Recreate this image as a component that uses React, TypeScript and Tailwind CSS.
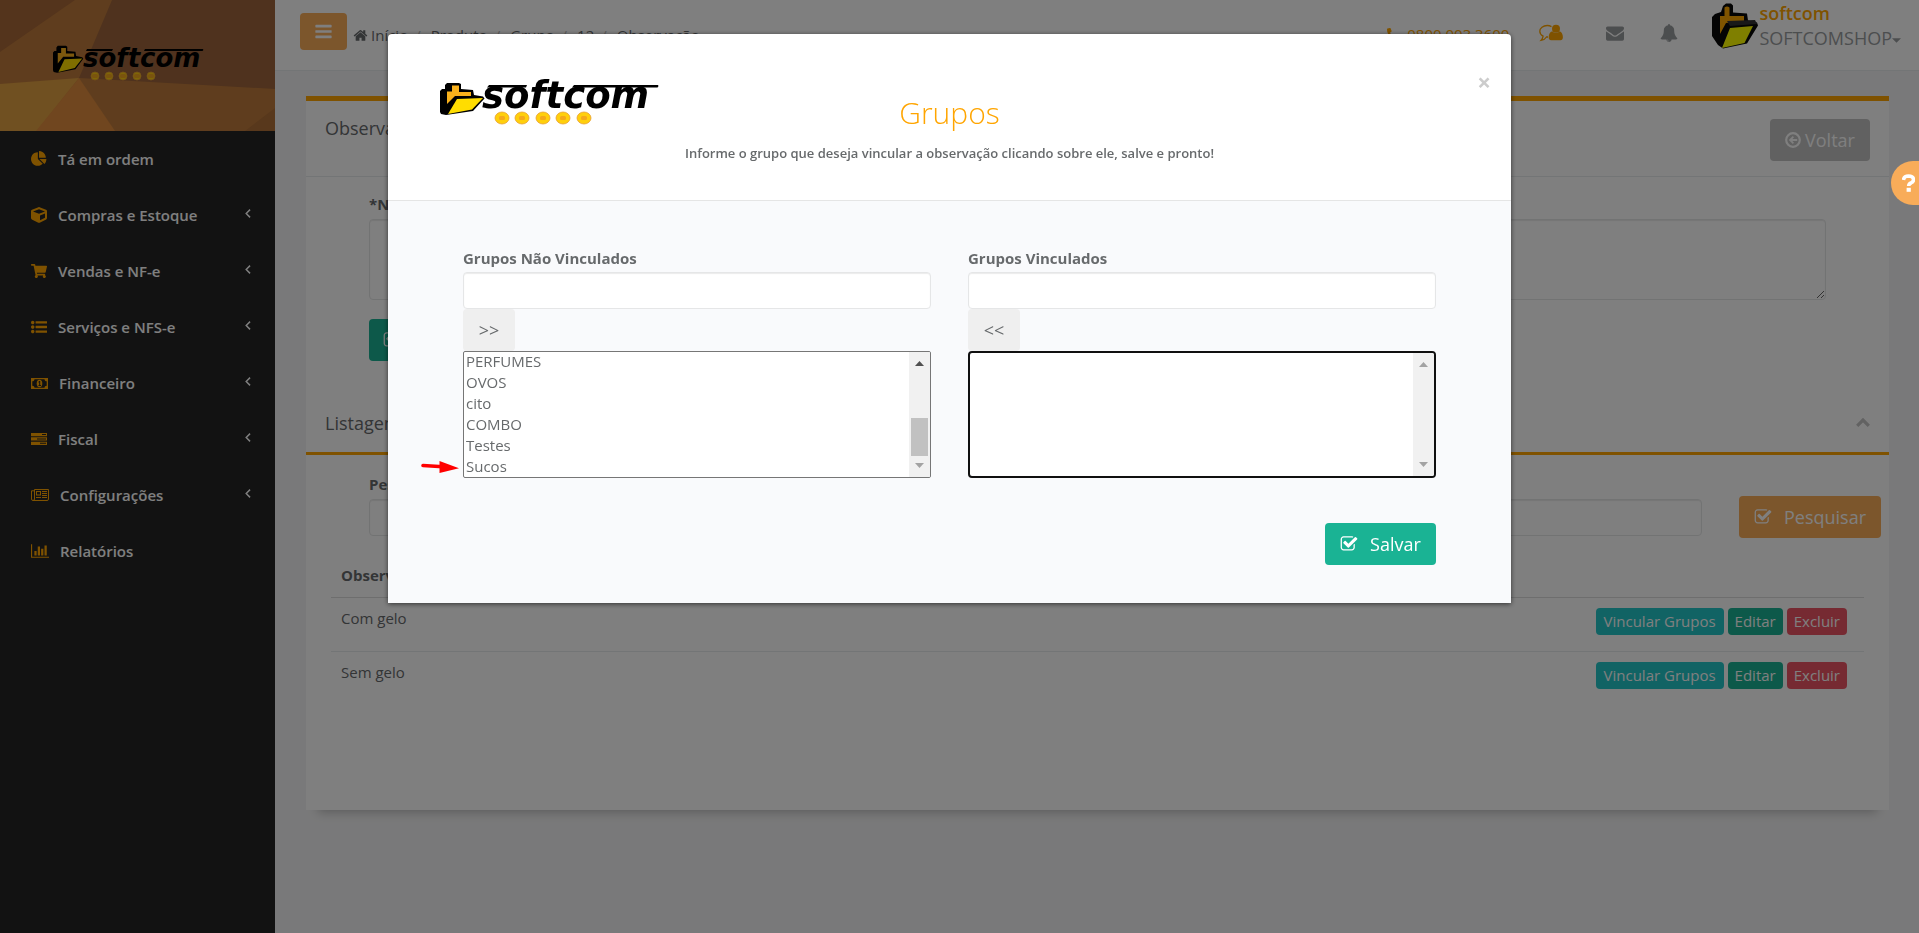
import { useEffect, useRef } from "react";
import type { ReactNode } from "react";
import { FaCube, FaPhone, FaShoppingCart } from "react-icons/fa";

type IconProps = { className?: string };

function Glyph({ box, d, className }: { box: string; d: string; className?: string }) {
  return (
    <svg viewBox={box} fill="currentColor" className={className} aria-hidden="true">
      <path d={d} />
    </svg>
  );
}

const BARS =
  "M1664 1344v128q0 26-19 45t-45 19h-1408q-26 0-45-19t-19-45v-128q0-26 19-45t45-19h1408q26 0 45 19t19 45zm0-512v128q0 26-19 45t-45 19h-1408q-26 0-45-19t-19-45v-128q0-26 19-45t45-19h1408q26 0 45 19t19 45zm0-512v128q0 26-19 45t-45 19h-1408q-26 0-45-19t-19-45v-128q0-26 19-45t45-19h1408q26 0 45 19t19 45z";
const HOME =
  "M1472 992v480q0 26-19 45t-45 19h-384v-384h-256v384h-384q-26 0-45-19t-19-45v-480q0-1 .5-3t.5-3l575-474 575 474q1 2 1 6zm223-69l-62 74q-8 9-21 11h-3q-13 0-21-7l-692-577-692 577q-12 8-24 7-13-2-21-11l-62-74q-8-10-7-23.5t11-21.5l719-599q32-26 76-26t76 26l244 204v-195q0-14 9-23t23-9h192q14 0 23 9t9 23v408l219 182q10 8 11 21.5t-7 23.5z";
const ENVELOPE =
  "M1792 710v794q0 66-47 113t-113 47h-1472q-66 0-113-47t-47-113v-794q44 49 101 87 362 246 497 345 57 42 92.5 65.5t94.5 48 110 24.5h2q51 0 110-24.5t94.5-48 92.5-65.5q170-123 498-345 57-39 100-87zm0-294q0 79-49 151t-122 123q-376 261-468 325-10 7-42.5 31t-54 38.5-52 32.5-57.5 27-50 9h-2q-23 0-50-9t-57.5-27-52-32.5-54-38.5-42.5-31q-91-64-262-182.5t-205-142.5q-62-42-117-115.5t-55-136.5q0-78 41.5-130t118.5-52h1472q65 0 112.5 47t47.5 113z";
const CHECK_SQUARE =
  "M1472 930v318q0 119-84.5 203.5t-203.5 84.5h-832q-119 0-203.5-84.5t-84.5-203.5v-832q0-119 84.5-203.5t203.5-84.5h832q63 0 117 25 15 7 18 23 3 17-9 29l-49 49q-10 10-23 10-3 0-9-2-23-6-45-6h-832q-66 0-113 47t-47 113v832q0 66 47 113t113 47h832q66 0 113-47t47-113v-254q0-13 9-22l64-64q10-10 23-10 6 0 12 3 20 8 20 29zm231-489l-814 814q-24 24-57 24t-57-24l-430-430q-24-24-24-57t24-57l110-110q24-24 57-24t57 24l263 263 647-647q24-24 57-24t57 24l110 110q24 24 24 57t-24 57z";
const PIE =
  "M768 890l546 546q-106 108-247.5 168t-298.5 60q-209 0-385.5-103t-279.5-279.5-103-385.5 103-385.5 279.5-279.5 385.5-103v762zm187 6h773q0 157-60 298.5t-168 247.5zm709-128h-768v-768q209 0 385.5 103t279.5 279.5 103 385.5z";
const CHART =
  "M640 896v512h-256v-512h256zm384-512v1024h-256v-1024h256zm1024 1152v128h-2048v-1536h128v1408h1920zm-640-896v768h-256v-768h256zm384-384v1152h-256v-1152h256z";
const LIST =
  "M384 1408q0 80-56 136t-136 56-136-56-56-136 56-136 136-56 136 56 56 136zm0-512q0 80-56 136t-136 56-136-56-56-136 56-136 136-56 136 56 56 136zm1408 416v192q0 13-9.5 22.5t-22.5 9.5h-1216q-13 0-22.5-9.5t-9.5-22.5v-192q0-13 9.5-22.5t22.5-9.5h1216q13 0 22.5 9.5t9.5 22.5zm-1408-928q0 80-56 136t-136 56-136-56-56-136 56-136 136-56 136 56 56 136zm1408 416v192q0 13-9.5 22.5t-22.5 9.5h-1216q-13 0-22.5-9.5t-9.5-22.5v-192q0-13 9.5-22.5t22.5-9.5h1216q13 0 22.5 9.5t9.5 22.5zm0-512v192q0 13-9.5 22.5t-22.5 9.5h-1216q-13 0-22.5-9.5t-9.5-22.5v-192q0-13 9.5-22.5t22.5-9.5h1216q13 0 22.5 9.5t9.5 22.5z";
const BELL =
  "M912 1696q0-16-16-16-59 0-101.5-42.5t-42.5-101.5q0-16-16-16t-16 16q0 73 51.5 124.5t124.5 51.5q16 0 16-16zm816-288q0 52-38 90t-90 38h-448q0 106-75 181t-181 75-181-75-75-181h-448q-52 0-90-38t-38-90q50-42 91-88t85-119.5 74.5-158.5 50-206 19.5-260q0-152 117-282.5t307-158.5q-8-19-8-39 0-40 28-68t68-28 68 28 28 68q0 20-8 39 190 28 307 158.5t117 282.5q0 139 19.5 260t50 206 74.5 158.5 85 119.5 91 88z";

function MoneyIcon({ className }: IconProps) {
  return (
    <svg viewBox="0 0 17 11" className={className} aria-hidden="true">
      <rect width="17" height="11" fill="currentColor" />
      <path d="M3.500 1.200h10c0 1.200.9 2.100 2.200 2.100v4.400c-1.300 0-2.200.9-2.200 2.100h-10c0-1.200-.9-2.100-2.200-2.100v-4.400c1.300 0 2.200-.9 2.200-2.100z" fill="#242424" />
      <ellipse cx="8.500" cy="5.500" rx="2.800" ry="3.700" fill="currentColor" />
      <path d="M7.400 3.800l1-.8h.8v4h.8v.9H7.500V7h.7V4.300l-.6.4z" fill="#242424" />
    </svg>
  );
}

function TasksIcon({ className }: IconProps) {
  return (
    <svg viewBox="0 0 16 12" className={className} aria-hidden="true">
      <path d="M0 0h16v3.300H0zM0 4.300h16v3.300H0zM0 8.700h16V12H0z" fill="currentColor" />
      <path d="M11 1h4v1h-4zM6 5.400h9v1H6zM9 9.800h6v1H9z" fill="#242424" />
    </svg>
  );
}

function NewsIcon({ className }: IconProps) {
  return (
    <svg viewBox="0 0 18 12" className={className} aria-hidden="true">
      <path d="M3.500.5h14v9.500a1.500 1.500 0 0 1-1.500 1.500H2A1.500 1.500 0 0 1 .5 10V1.800h3M3.500.5V10A1.500 1.500 0 0 1 2 11.500" fill="none" stroke="currentColor" />
      <path d="M5 2h5v4.500H5zm1 1v2.500h3V3zM11 2h5v1h-5zM11 4h5v1h-5zM11 6h5v1h-5zM5 8h5v1H5zM11 8h5v1h-5z" fill="currentColor" fillRule="evenodd" />
    </svg>
  );
}

function SupportIcon({ className }: IconProps) {
  return (
    <svg viewBox="0 0 24 18" className={className} aria-hidden="true">
      <path
        d="M12.500 2.600C11.300 1.900 9.800 1.500 8.200 1.500 4.100 1.500.8 4 .8 7.200c0 2 1.300 3.800 3.300 4.900-.2 1.700-.9 3-2.100 4.300 2.300-.3 4.200-1.300 5.500-3.400h1.500"
        fill="none"
        stroke="currentColor"
        strokeWidth="1.300"
      />
      <circle cx="17" cy="4.700" r="4" fill="currentColor" />
      <path d="M13.300 7.300c-2.500.5-3.600 3.200-3.600 6 0 2.200 1 3 2.300 3h9.500c1.500 0 2.400-.9 2.400-3 0-2.800-1.100-5.500-3.400-6-1.800 2.200-5.300 2.200-7.200 0z" fill="currentColor" />
    </svg>
  );
}

function BackIcon({ className }: IconProps) {
  return (
    <svg viewBox="0 0 16 16" className={className} aria-hidden="true">
      <circle cx="8" cy="8" r="6.800" fill="none" stroke="currentColor" strokeWidth="2.200" />
      <path d="M3.800 8l4-4 1.200 1.200L7.400 6.900h4.800v2.200H7.400L9 10.800 7.800 12z" fill="currentColor" />
    </svg>
  );
}

function Logo({ wide = false, className }: { wide?: boolean; className?: string }) {
  const coins = wide ? [62, 82, 103, 123, 144] : [42, 56, 70, 84, 98];
  return (
    <svg viewBox={wide ? "0 -10 220 54" : "0 -4 152 46"} className={className} role="img" aria-label="softcom">
      <g transform={wide ? "scale(1 1)" : "scale(.68 .84)"}>
        <path d="M5 3l2-2h12l2 1v5l12 1 1 5 9 1.500 1.500 2L33 29 6 33l-5-1-1-2V9l2-2h3z" fill="#000" />
        <path d="M12 3.500h7v6.500h12v4H15L7 22V9.500h5z" fill="#f9b11c" />
        <path d="M17 17l26-1-11 11.500L8 32z" fill="#ffdd00" />
      </g>
      <path
        d={wide ? "M49 3h38l-1 2.500H47zM134 3h84q1 1.500-.5 2.500H132z" : "M34 4h26l-1 2H33zM92 4h58q1 1-.5 2H91z"}
        fill="#000"
      />
      <text
        x={wide ? 42 : 30}
        y={wide ? 26 : 22}
        fontFamily="'DejaVu Sans', sans-serif"
        fontWeight="700"
        fontStyle="italic"
        fontSize={wide ? 37 : 26}
        fill="#000"
      >
        softcom
      </text>
      {coins.map((x) => (
        <g key={x}>
          <ellipse
            cx={x}
            cy={wide ? 36 : 31}
            rx={wide ? 7 : 4}
            ry={wide ? 6 : 4}
            fill="#ffcf0c"
            stroke="#e9a032"
            strokeWidth=".8"
          />
          <rect x={x - 3} y={wide ? 34 : 29} width="6" height="4" rx="1.500" fill="#f5a81c" />
        </g>
      ))}
    </svg>
  );
}

function FolderBadge({ className }: IconProps) {
  return (
    <svg viewBox="0 0 46 46" className={className} aria-hidden="true">
      <path d="M11 3l3-2.500h5l2 2v7l14 1 1 7 9 2 1 3-11 18-24 5L6 42 0 33V14l3-3 6-2z" fill="#080808" />
      <path d="M12.500 4.500q2.500-2 5 0V13h14.500v5L14 20 8 31V13h4.500z" fill="#ffa800" />
      <path d="M15 18l28-1 2 4-27 2z" fill="#333" />
      <path d="M18 25l23-2-8.500 17L10 45z" fill="#ffff00" />
    </svg>
  );
}

type MenuItem = { icon: ReactNode; label: string; open?: boolean };

const menu: MenuItem[] = [
  { icon: <Glyph box="0 0 1792 1792" d={PIE} className="size-4" />, label: "Tá em ordem" },
  { icon: <FaCube className="size-4" />, label: "Compras e Estoque", open: true },
  { icon: <FaShoppingCart className="size-4" />, label: "Vendas e NF-e", open: true },
  { icon: <Glyph box="0 0 1792 1792" d={LIST} className="size-4" />, label: "Serviços e NFS-e", open: true },
  { icon: <MoneyIcon className="h-[11px] w-[17px]" />, label: "Financeiro", open: true },
  { icon: <TasksIcon className="h-3 w-4" />, label: "Fiscal", open: true },
  { icon: <NewsIcon className="h-3 w-[18px]" />, label: "Configurações", open: true },
  { icon: <Glyph box="0 0 2048 1792" d={CHART} className="h-4 w-[18px]" />, label: "Relatórios" },
];

function Sidebar() {
  return (
    <aside className="w-[275px] shrink-0 bg-[#242424]">
      <div className="relative flex h-[131px] items-center justify-center overflow-hidden bg-[#c07c3c]">
        <svg viewBox="0 0 275 131" preserveAspectRatio="none" className="absolute inset-0 size-full" aria-hidden="true">
          <path d="M0 0h275v131H0z" fill="#bf7b3c" />
          <path d="M0 0h75L0 52z" fill="#a86838" />
          <path d="M112 0h163v89L79 78z" fill="#9e653c" />
          <path d="M0 84l79-6-42 53H0z" fill="#e0a042" />
          <path d="M79 78l36 53H36z" fill="#e08c3e" />
          <path d="M275 108v23h-30z" fill="#b07038" />
        </svg>
        <Logo className="relative mr-[18px] mb-1 h-[46px] w-[152px]" />
      </div>
      <nav>
        <ul>
          {menu.map(({ icon, label, open }) => (
            <li key={label}>
              <a href="#" className="flex h-14 items-center pr-6 pl-[31px] text-[15px] font-semibold text-white">
                <span className="text-[#ffa500]">{icon}</span>
                <span className="ml-[11px] flex-1">{label}</span>
                {open && (
                  <svg viewBox="0 0 6 10" className="mb-1 h-[9px] w-[6px]" fill="none" stroke="currentColor" strokeWidth="1.600" aria-hidden="true">
                    <path d="M5.300.7L1 5l4.300 4.300" />
                  </svg>
                )}
              </a>
            </li>
          ))}
        </ul>
      </nav>
    </aside>
  );
}

const crumbs = ["Produto", "Grupo", "12", "Observação"];

function TopBar() {
  return (
    <header className="flex h-[71px] items-start justify-between border-b border-[#e7eaec] bg-white pr-[18px] pl-[25px]">
      <div className="flex items-start">
        <button type="button" aria-label="Menu" className="mt-[13px] flex h-[37px] w-[47px] items-center justify-center rounded bg-[#f8ac59] text-white">
          <Glyph box="0 0 1792 1792" d={BARS} className="size-[19px]" />
        </button>
        <nav className="mt-6 ml-[6px] flex items-center text-[15px] leading-[22px]">
          <a href="#" className="flex items-center gap-[3px]">
            <Glyph box="0 0 1792 1792" d={HOME} className="size-[15px]" />
            Início
          </a>
          {crumbs.map((crumb) => (
            <span key={crumb} className="flex">
              <span className="pr-[10px] pl-[7px] text-[#bbb]">/</span>
              <a href="#">{crumb}</a>
            </span>
          ))}
        </nav>
      </div>
      <div className="flex items-start text-[#999c9e]">
        <span className="mt-[23px] mr-[30px] flex items-center gap-2 text-[15px] leading-[22px] text-[#ffa500]">
          <FaPhone className="size-3 -scale-x-100" />
          0800 003 3600
        </span>
        <SupportIcon className="mt-6 h-[18px] w-6 text-[#ffa500]" />
        <Glyph box="0 0 1792 1792" d={ENVELOPE} className="mt-6 ml-[43px] size-[18px]" />
        <Glyph box="0 0 1792 1792" d={BELL} className="mt-6 ml-9 size-[18px]" />
        <FolderBadge className="mt-[3px] ml-[34px] size-[46px]" />
        <div className="ml-px pt-px text-lg leading-[25px]">
          <div className="font-semibold text-[#ffa500]">softcom</div>
          <a href="#" className="flex items-center">
            SOFTCOMSHOP
            <svg viewBox="0 0 10 5" className="mt-[3px] h-[5px] w-[9px]" fill="currentColor" aria-hidden="true">
              <path d="M0 0h10L5 5z" />
            </svg>
          </a>
        </div>
      </div>
    </header>
  );
}

const inputClass = "block w-full rounded border border-[#e5e6e7] bg-white shadow-[inset_0_1px_1px_rgba(0,0,0,.08)]";

function CheckButton({ label, className }: { label: string; className: string }) {
  return (
    <button type="button" className={`flex h-[42px] items-center gap-3 rounded text-lg text-white ${className}`}>
      <Glyph box="0 0 1792 1792" d={CHECK_SQUARE} className="size-[18px]" />
      {label}
    </button>
  );
}

const rows = ["Com gelo", "Sem gelo"];

function Content() {
  return (
    <main className="mt-[25px] mr-[30px] mb-10 ml-[31px] h-[714px] border-t-5 border-[#ffa500] bg-white shadow-[0_14px_10px_-12px_rgba(0,0,0,.25)]">
      <div className="flex h-[76px] items-start justify-between border-b border-[#e7eaec] pt-[18px] pr-[19px] pl-[19px]">
        <h2 className="text-lg leading-[18px] font-medium">Observação</h2>
        <button type="button" className="flex h-[42px] w-[100px] items-center justify-center gap-1 rounded bg-[#c2c2c2] text-lg text-white">
          <BackIcon className="size-4" />
          Voltar
        </button>
      </div>
      <div className="pr-[63px] pl-[63px]">
        <label htmlFor="name" className="block pt-4 pb-[3px] text-[15px] leading-[23px] font-bold">
          *Nome
        </label>
        <textarea id="name" className={`${inputClass} h-[81px] resize`} />
        <CheckButton label="Salvar" className="mt-[19px] bg-[#1ab394] px-[14px]" />
      </div>
      <div className="mt-10 flex h-[54px] items-center justify-between border-b-3 border-[#ffa500] px-[19px] pb-2">
        <h2 className="text-lg leading-5 font-medium">Listagem</h2>
        <svg viewBox="0 0 14 9" className="h-[9px] w-[14px] text-[#c4c4c4]" fill="none" stroke="currentColor" strokeWidth="3.200" aria-hidden="true">
          <path d="M1.200 7.800L7 2l5.800 5.800" />
        </svg>
      </div>
      <div className="flex items-end gap-[37px] pt-[18px] pr-2 pl-[63px]">
        <div className="flex-1 pb-[2px]">
          <label htmlFor="search" className="block pb-[3px] text-[15px] leading-[23px] font-bold">
            Pesquisa
          </label>
          <input id="search" type="text" className={`${inputClass} h-[37px]`} />
        </div>
        <CheckButton label="Pesquisar" className="w-[142px] justify-center bg-[#f8ac59]" />
      </div>
      <table className="mt-[15px] mr-[25px] ml-[25px] w-[calc(100%-50px)] text-[15px] leading-[22px]">
        <thead>
          <tr className="h-[44px] border-b border-[#ddd]">
            <th className="pl-[10px] text-left font-bold">Observação</th>
            <th aria-label="Ações" />
          </tr>
        </thead>
        <tbody>
          {rows.map((row, i) => (
            <tr key={row} className={i === 0 ? "h-[54px] border-b border-[#e7eaec] align-top" : "h-[54px] align-top"}>
              <td className="pt-[9px] pl-[10px]">{row}</td>
              <td className="pt-[10px] pr-[17px]">
                <div className="flex justify-end gap-1 leading-[27px] text-white">
                  <button type="button" className="rounded bg-[#23c6c8] px-2">
                    Vincular Grupos
                  </button>
                  <button type="button" className="rounded bg-[#1ab394] px-[7px]">
                    Editar
                  </button>
                  <button type="button" className="rounded bg-[#ed5565] px-[7px]">
                    Excluir
                  </button>
                </div>
              </td>
            </tr>
          ))}
        </tbody>
      </table>
    </main>
  );
}

const unlinked = ["PERFUMES", "OVOS", "cito", "COMBO", "Testes", "Sucos"];

function ScrollRail({ active = false }: { active?: boolean }) {
  return (
    <div className="flex w-[21px] shrink-0 flex-col items-center justify-between bg-[#f1f1f1] py-[9px]" aria-hidden="true">
      <svg viewBox="0 0 9 5" className={active ? "h-[5px] w-[9px] text-[#505050]" : "h-[5px] w-[9px] text-[#a3a3a3]"} fill="currentColor">
        <path d="M0 5h9L4.500 0z" />
      </svg>
      <div className="flex flex-1 flex-col justify-end pb-[7px]">{active && <div className="h-[38px] w-[17px] bg-[#c1c1c1]" />}</div>
      <svg viewBox="0 0 9 5" className="h-[5px] w-[9px] text-[#a3a3a3]" fill="currentColor">
        <path d="M0 0h9L4.500 5z" />
      </svg>
    </div>
  );
}

type GroupListProps = { id: string; label: string; move: string; options: string[]; focused?: boolean };

function GroupList({ id, label, move, options, focused }: GroupListProps) {
  const list = useRef<HTMLSelectElement>(null);

  useEffect(() => {
    if (list.current) list.current.scrollTop = list.current.scrollHeight;
  }, []);

  return (
    <div className="flex-1">
      <label htmlFor={`${id}-filter`} className="block pb-[2px] text-[15px] leading-[23px] font-bold">
        {label}
      </label>
      <input id={`${id}-filter`} type="text" className={`${inputClass} h-[37px]`} />
      <button type="button" className="block h-[42px] w-[52px] rounded bg-[#efefef] text-lg">
        {move}
      </button>
      <div
        className={
          focused
            ? "flex h-[127px] overflow-hidden rounded border-2 border-[#101010] bg-white"
            : "flex h-[127px] overflow-hidden rounded-xs border border-[#767676] bg-white"
        }
      >
        <select ref={list} multiple aria-label={label} className="min-w-0 flex-1 overflow-y-auto text-[15px] outline-none [scrollbar-width:none]">
          {options.map((option) => (
            <option key={option} className="block h-[21px] min-h-0 px-[2px] py-0 leading-[21px]">
              {option}
            </option>
          ))}
        </select>
        <ScrollRail active={options.length > 0} />
      </div>
    </div>
  );
}

function GroupsModal() {
  return (
    <div className="fixed inset-0 flex items-start justify-center bg-black/50 pt-[34px] pr-5">
      <div role="dialog" aria-labelledby="groups-title" className="w-[1123px] max-w-full rounded-t bg-white shadow-[0_1px_5px_rgba(0,0,0,.6)]">
        <div className="grid h-[167px] grid-cols-[1fr_auto_1fr] items-start border-b border-[#e5e5e5] px-5 pt-9">
          <Logo wide className="mt-[2px] ml-8 h-[54px] w-[220px]" />
          <div className="pt-[25px] text-center">
            <h1 id="groups-title" className="text-3xl leading-9 font-light text-[#ffa500]">
              Grupos
            </h1>
            <p className="mt-3 text-[13px] leading-5 font-semibold">
              Informe o grupo que deseja vincular a observação clicando sobre ele, salve e pronto!
            </p>
          </div>
          <button type="button" aria-label="Fechar" className="justify-self-end text-2xl leading-none font-bold text-[#ccc]">
            ×
          </button>
        </div>
        <div className="bg-[#f9fafc] px-[75px] pt-[46px] pb-[38px]">
          <div className="relative flex gap-[37px]">
            <GroupList id="unlinked" label="Grupos Não Vinculados" move=">>" options={unlinked} />
            <GroupList id="linked" label="Grupos Vinculados" move="<<" options={[]} focused />
            <svg viewBox="0 0 38 12" className="absolute bottom-[5px] -left-[42px] h-3 w-[38px]" aria-hidden="true">
              <path d="M2 4.500l20 1.300" stroke="#ff0000" strokeWidth="3.600" strokeLinecap="round" />
              <path d="M18.500 0L38 7.300 18.500 12z" fill="#ff0000" />
            </svg>
          </div>
          <div className="mt-[45px] flex justify-end">
            <CheckButton label="Salvar" className="w-[111px] justify-center bg-[#1ab394]" />
          </div>
        </div>
      </div>
    </div>
  );
}

export default function App() {
  return (
    <div className="flex min-h-screen bg-[#f3f3f4] font-['Open_Sans',sans-serif] text-[#676a6c]">
      <Sidebar />
      <div className="min-w-0 flex-1">
        <TopBar />
        <Content />
      </div>
      <GroupsModal />
      <button
        type="button"
        aria-label="Ajuda"
        className="fixed top-[161px] right-0 flex h-11 w-7 items-center justify-end rounded-l-full bg-[#f8ac59] pr-1 text-white"
      >
        <svg viewBox="0 0 13 18" className="h-[18px] w-[13px]" fill="none" aria-hidden="true">
          <path d="M1.500 6Q2 2 6.500 2q5 .2 5 3.800 0 2-2.500 3.200Q6.700 10 6.700 12" stroke="currentColor" strokeWidth="3.600" />
          <path d="M4.600 13.800h4.200v4H4.600z" fill="currentColor" />
        </svg>
      </button>
    </div>
  );
}
